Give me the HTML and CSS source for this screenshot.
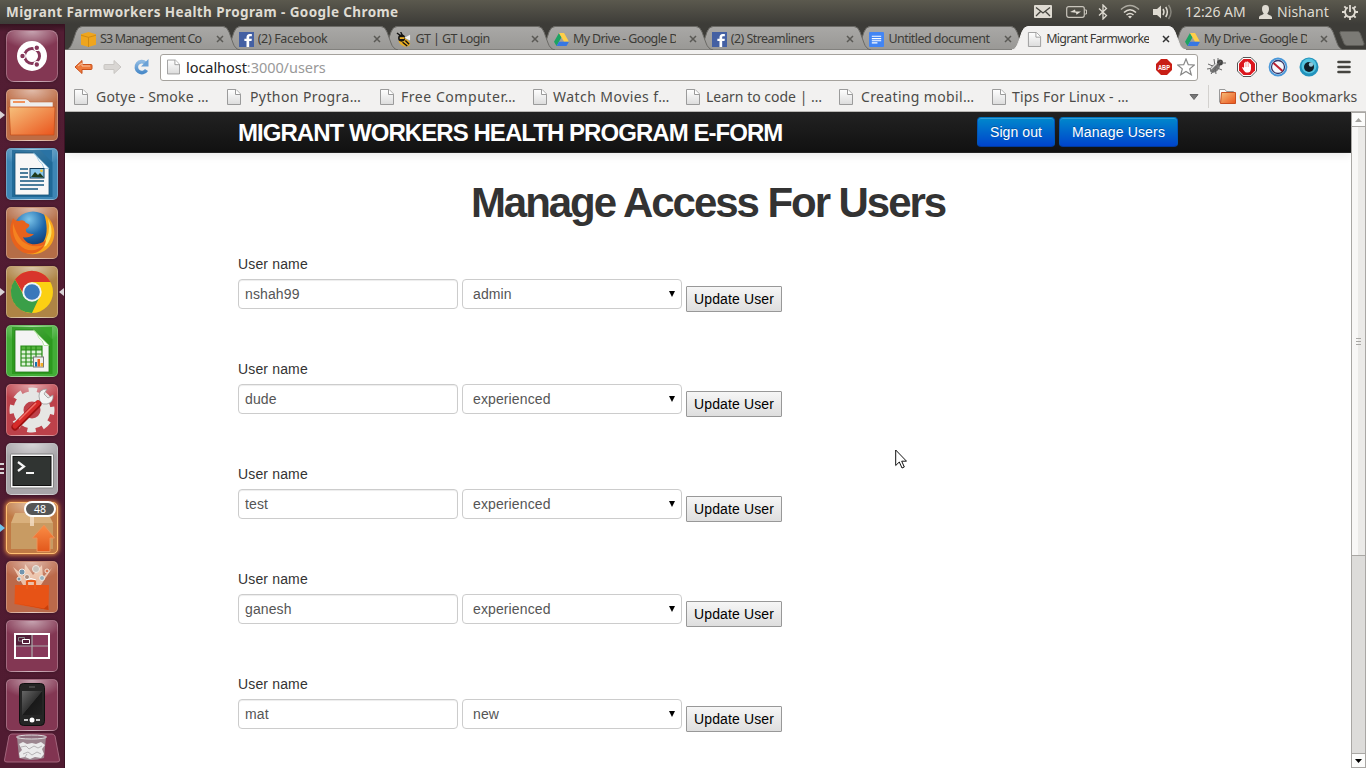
FILE: index.html
```html
<!DOCTYPE html>
<html lang="en">
<head>
<meta charset="utf-8">
<title>Migrant Farmworkers Health Program</title>
<link rel="stylesheet" href="styles.css">
</head>
<body>
<svg class="defs" width="0" height="0">
  <defs>
    <linearGradient id="tabFill" x1="0" y1="0" x2="0" y2="1"><stop offset="0" stop-color="#a9a8a6"/><stop offset="1" stop-color="#999895"/></linearGradient>
    <linearGradient id="paper" x1="0" y1="0" x2="0" y2="1"><stop offset="0" stop-color="#fff"/><stop offset="1" stop-color="#dcdcdc"/></linearGradient>
    <linearGradient id="orange" x1="0" y1="0" x2="1" y2="1"><stop offset="0" stop-color="#f6c07c"/><stop offset="1" stop-color="#ea541c"/></linearGradient>
    <linearGradient id="arrowUp" x1="0" y1="0" x2="0" y2="1"><stop offset="0" stop-color="#fb8d45"/><stop offset="1" stop-color="#e2581c"/></linearGradient>
    <linearGradient id="screen" x1="0" y1="0" x2="1" y2="1"><stop offset="0" stop-color="#666"/><stop offset=".5" stop-color="#333"/><stop offset=".52" stop-color="#191919"/><stop offset="1" stop-color="#222"/></linearGradient>
    <linearGradient id="bluearc" x1="0" y1="0" x2="0" y2="1"><stop offset="0" stop-color="#8db9e2"/><stop offset="1" stop-color="#4b8bc9"/></linearGradient>
    <radialGradient id="globe" cx=".4" cy=".2" r=".8"><stop offset="0" stop-color="#7cc5ea"/><stop offset=".5" stop-color="#1c66aa"/><stop offset="1" stop-color="#0b2a5c"/></radialGradient>
    <symbol id="tabShape" viewBox="0 0 174 24"><path d="M0 24C4 23 5 20 7 15L10 6Q12 .5 16 .5H157Q161 .5 163 6L167 17Q169 23 174 24Z"/></symbol>
    <symbol id="page" viewBox="0 0 14 16"><path d="M.5.5H9L13.500 5V15.500H.5Z" fill="url(#paper)" stroke="#9b9b9b"/><path d="M8.500 .5V5.500H13.500" fill="#fff" stroke="#9b9b9b"/></symbol>
    <symbol id="cross" viewBox="0 0 8 8"><path d="M1 1 7 7M7 1 1 7" fill="none" stroke="currentColor" stroke-width="1.500"/></symbol>
    <symbol id="fb" viewBox="0 0 14 14"><path fill="#4460a3" d="M0 0h14v14H0z"/><path fill="#fff" d="M7 14V8.500H5V6.300H7V5C7 3 8 1.800 10 1.800H12V4H10.700C9.800 4 9.500 4.300 9.500 5V6.300H12L11.700 8.500H9.500V14Z"/></symbol>
    <symbol id="drive" viewBox="0 0 16 14"><path fill="#1da362" d="M5.300 0 0 9.300 2.700 14 8 4.700Z"/><path fill="#ffcf48" d="M5.300 0H10.700L16 9.300H10.700Z"/><path fill="#3777e3" d="M5.300 9.300H16L13.300 14H2.700Z"/></symbol>
    <symbol id="docs" viewBox="0 0 16 16"><rect width="16" height="16" rx="1" fill="#4285f4"/><path stroke="#fff" stroke-width="1.200" d="M3 4.500H13M3 7H13M3 9.300H13M3 11.600H9"/></symbol>
  </defs>
</svg>

<header class="panel">
  <span class="panel-title">Migrant Farmworkers Health Program - Google Chrome</span>
  <div class="indicators">
    <svg class="i-mail" width="18" height="13" viewBox="0 0 18 13"><rect width="18" height="13" rx="1" fill="#dfdbd2"/><path d="M2 2.500 9 8 16 2.500M2 11 6.500 6.500M16 11 11.500 6.500" fill="none" stroke="#45443e" stroke-width="1.300"/></svg>
    <svg class="i-bat" width="21" height="12" viewBox="0 0 21 12"><rect x=".7" y=".7" width="17.600" height="10.600" rx="2" fill="none" stroke="#c9c5bc" stroke-width="1.200"/><path d="M19 4h1.500v4H19" fill="none" stroke="#c9c5bc"/><path d="M4 6 9 3.500 9.500 5.500 15 5.500 10.500 8.700 10 6.800Z" fill="#dfdbd2"/></svg>
    <svg class="i-bt" width="10" height="16" viewBox="0 0 10 16"><path d="M1 4.500 8.500 11.500 5 15V1L8.500 4.500 1 11.500" fill="none" stroke="#dfdbd2" stroke-width="1.300"/></svg>
    <svg class="i-wifi" width="20" height="15" viewBox="0 0 20 15"><g fill="none" stroke="#dfdbd2" stroke-width="1.600"><path d="M1 5.500Q10-2.500 19 5.500" opacity=".65"/><path d="M4 8.500Q10 3 16 8.500"/><path d="M6.500 11Q10 8 13.500 11"/></g><path d="M8 12.500Q10 11.200 12 12.500L10 14.500Z" fill="#dfdbd2"/></svg>
    <svg class="i-vol" width="20" height="16" viewBox="0 0 20 16"><path d="M0 5H4L8 1.500V14.500L4 11H0Z" fill="#dfdbd2"/><g fill="none" stroke="#dfdbd2" stroke-width="1.500"><path d="M10 5Q12 8 10 11"/><path d="M12.700 3Q16 8 12.700 13"/><path d="M15.500 1Q20.500 8 15.500 15" opacity=".4"/></g></svg>
    <span class="clock">12:26 AM</span>
    <svg class="i-user" width="13" height="14" viewBox="0 0 13 14"><path d="M6.500 0C9 0 10 1.500 10 4S9 7.500 8.300 8.500C8.500 10 13 10 13 12.500V14H0V12.500C0 10 4.500 10 4.700 8.500 4 7.500 3 6.500 3 4S4 0 6.500 0Z" fill="#dfdbd2"/></svg>
    <span class="user">Nishant</span>
    <svg class="i-gear" width="16" height="16" viewBox="0 0 16 16"><g fill="none" stroke="#dfdbd2"><path d="M5.800 3.500A5 5 0 1 0 10.200 3.500" stroke-width="1.900"/><path d="M8 1V8M8 13V16M0 8H3M13 8H16M2.300 2.300 4.500 4.500M13.700 2.300 11.500 4.500M2.300 13.700 4.500 11.500M13.700 13.700 11.500 11.500" stroke-width="1.800"/></g></svg>
  </div>
</header>

<div class="desktop">
  <nav class="launcher">
    <div class="app dash"><svg viewBox="0 0 52 52"><circle cx="26" cy="26" r="15" fill="#fff"/><circle cx="26" cy="26" r="7.500" fill="none" stroke="#85375a" stroke-width="3"/><g stroke="#fff" stroke-width="1.200" fill="#85375a"><circle cx="16.500" cy="26" r="2.800"/><circle cx="30.800" cy="17.700" r="2.800"/><circle cx="30.800" cy="34.500" r="2.800"/></g><circle cx="26" cy="26" r="5.500" fill="#fff"/></svg></div>
    <div class="app files"><i class="pip"></i><svg viewBox="0 0 52 52"><path d="M4 11Q4 10 5 10H20Q22 10 24 13H47V30H4Z" fill="#eee" stroke="#c56b3c" stroke-width=".6"/><path d="M7 12H19V14H7Z" fill="#f0925c"/><path d="M3 18H49L48 46H4.500Z" fill="url(#orange)" stroke="#c6501c" stroke-width=".8"/></svg></div>
    <div class="app writer"><svg viewBox="0 0 52 52"><path d="M6 2H36L46.500 14V49H6Z" fill="#17608f" opacity=".75"/><path d="M34 2H46V14Z" fill="#2a73a4"/><path d="M9 5H28L43 20V47H9Z" fill="#f7f7f7" stroke="#144f75" stroke-width=".8"/><path d="M27.500 5 43 20.500H38Q37 15 33 13 31 7 27.500 5Z" fill="#fff" stroke="#8ec4e2" stroke-width=".8"/><g stroke="#14577f" stroke-width="1.700"><path d="M14 21H22M14 25H22M14 29H22M14 33H38M14 37H38M14 41H32"/></g><rect x="24" y="20.500" width="14" height="9.500" fill="#8cc7e9" stroke="#0f3d5e"/><path d="M25 29 29 24 32 27 34 25 38 29.500Z" fill="#203b1b"/><circle cx="35.500" cy="22.800" r="1.400" fill="#f4c534"/></svg></div>
    <div class="app firefox"><svg viewBox="0 0 52 52"><circle cx="27" cy="24.500" r="20" fill="url(#globe)"/><path d="M38 7C50 15 52 32 42 41 37 46 28 49 20 46 38 43 45 28 38 7Z" fill="#f9a71c"/><path d="M42 12Q50 26 40 39L36 40Q46 26 42 12Z" fill="#ffe261"/><path d="M7 11C8 13 10 14 13 14Q18 12 20 16C24 17 25 19 20 22 19 26 23 27 28 27 24 31 19 31 17 30 20 38 31 40 40 33 39 43 29 49 19 46 7 42 2 28 5 17Z" fill="#e8621c"/><path d="M7 16Q5 34 19 42 29 46 38 38 26 42 16 34 10 27 7 16Z" fill="#f58220"/></svg></div>
    <div class="app chrome"><i class="pip"></i><i class="pip-right"></i><svg viewBox="0 0 52 52"><circle cx="26" cy="26" r="21" fill="#fbd013"/><path d="M9 13.500 18 30 26 35 33 32 26 47A21 21 0 0 1 9 13.500Z" fill="#3a9f48"/><path d="M9 13.500 17.500 28Q17 17 26 16H44.500A21 21 0 0 0 9 13.500Z" fill="#d8352c"/><circle cx="26" cy="26" r="9.700" fill="#f3f5f6"/><circle cx="26" cy="26" r="7.800" fill="#3a78bb"/></svg></div>
    <div class="app calc"><svg viewBox="0 0 52 52"><path d="M6 2H36L46.500 14V49H6Z" fill="#259318" opacity=".75"/><path d="M34 2H46V14Z" fill="#3aa52c"/><path d="M9 5H28L43 20V47H9Z" fill="#f4f4f4" stroke="#1e7a14" stroke-width=".8"/><path d="M27.500 5 43 20.500H38Q37 15 33 13 31 7 27.500 5Z" fill="#fff" stroke="#a4e28e" stroke-width=".8"/><path d="M15 21H36V41H15Z" fill="#dff2da"/><path d="M15 21H36V25H15Z" fill="#55b33e"/><path d="M15 21H36V41H15ZM15 25H36M15 29H36M15 33H36M15 37H36M20 21V41M25 21V41M30 21V41" stroke="#268b16" fill="none" stroke-width="1.200"/><rect x="27.500" y="32" width="10" height="10" fill="#eee" stroke="#777"/><path d="M29 37H31V41.500H29Z" fill="#1473b0"/><path d="M31.500 34H34V41.500H31.500Z" fill="#e5611d"/><path d="M34.500 38H37V41.500H34.500Z" fill="#f0ac25"/></svg></div>
    <div class="app settings"><svg viewBox="0 0 52 52"><circle cx="26" cy="26" r="13.500" fill="none" stroke="#e6e6e4" stroke-width="10"/><circle cx="26" cy="26" r="20" fill="none" stroke="#e6e6e4" stroke-width="5" stroke-dasharray="8.500 7.208" stroke-dashoffset="4"/><path d="M35 19 42 12" stroke="#e4e4e4" stroke-width="7"/><path d="M33 12Q33 5 41 5L38 10 42 14 47 11Q48 18 41 20 37 21 34 18Z" fill="#f2f2f2" stroke="#999" stroke-width=".8"/><path d="M9 43 32 20" stroke="#9e1111" stroke-width="7" stroke-linecap="round"/><path d="M9 42 32 19" stroke="#d62b29" stroke-width="5" stroke-linecap="round"/><path d="M13 36 30 19" stroke="#f0746d" stroke-width="1.500"/></svg></div>
    <div class="app terminal"><i class="bars"></i><svg viewBox="0 0 52 52"><rect x="4.500" y="11" width="43" height="34" rx="1" fill="#f7f7f7" stroke="#858585"/><rect x="7" y="13.500" width="38" height="29" fill="#303432" stroke="#111"/><path d="M12 19 18 23.500 12 28" fill="none" stroke="#f6f6f6" stroke-width="2.200"/><path d="M20 30H28" stroke="#f6f6f6" stroke-width="2"/></svg></div>
    <div class="app updates"><i class="pip blue"></i><svg viewBox="0 0 52 52"><path d="M9 11H42L47 21H5Z" fill="#d9b07c"/><path d="M5 21H47V47H5Z" fill="#c89b63"/><path d="M24 11H28V24H24Z" fill="#f4dfc5" opacity=".8"/><path d="M38 23 48.500 36H44V49.500H31V36H26.500Z" fill="url(#arrowUp)" stroke="#e9935a"/></svg><span class="badge">48</span></div>
    <div class="app store"><svg viewBox="0 0 52 52"><path d="M7 6 17 24H35L46 7 37 16 36 4 27 14 19 3 18 15Z" fill="#ffe7d2" opacity=".7"/><g stroke="#efe8e1" stroke-width="1"><circle cx="16" cy="11" r="3" fill="#7194ae"/><circle cx="30" cy="8" r="3.500" fill="#c9c3bc"/><circle cx="41" cy="10" r="2" fill="#d8744f"/><circle cx="21" cy="16" r="2.500" fill="#ac8e7e"/><circle cx="36" cy="17" r="2.500" fill="#9bb3bd"/><circle cx="13" cy="18" r="2" fill="#7a97a6"/></g><path d="M9 24 43 24 42.500 49 8.500 43Z" fill="#e75316"/><path d="M8.500 42 38 47.500 42 44 42.500 49Z" fill="#c63f0b"/><path d="M21 28V20H29V28" fill="none" stroke="#eb5a17" stroke-width="2.200"/><path d="M20 19Q25 16 30 19" fill="none" stroke="#fff" stroke-width="1"/></svg></div>
    <div class="app workspaces"><svg viewBox="0 0 52 52"><rect x="9" y="14" width="34" height="24" fill="#87385a" stroke="#fff" stroke-width="2"/><path d="M10 15H26V26H10Z" fill="#54203a"/><path d="M26 15V37M10 26H42" stroke="#aaa" stroke-width="1.200"/><path d="M12.500 17.500H18.500V21H12.500Z" fill="none" stroke="#888"/><path d="M16.500 19.500H23.500V23.500H16.500Z" fill="#54203a" stroke="#fff"/></svg></div>
    <div class="app phone"><svg viewBox="0 0 52 52"><rect x="13.500" y="4.500" width="25" height="42" rx="4" fill="#252525" stroke="#101010"/><rect x="16" y="12" width="20" height="24" fill="url(#screen)"/><path d="M23 8H29" stroke="#666"/><circle cx="26" cy="41" r="2.500" fill="#fff"/><path d="M18 41H22M30 41H34" stroke="#fff" stroke-width="1.500"/></svg></div>
    <div class="trash"><svg viewBox="0 0 56 30"><path d="M8 1H48Q50 1 51 3L55.500 27Q56 29 53 29H3Q0 29 .5 27L5 3Q6 1 8 1Z" fill="#813451" stroke="#a2657c"/><path d="M13 4H42L40 25Q27 29 15 25Z" fill="#a6a1a4" opacity=".75"/><ellipse cx="27.500" cy="4" rx="15" ry="2" fill="#8e6d7c" stroke="#ddd"/><path d="M15 11 19 9 23 11 28 10 32 11 37 9 41 12 38 16 40 21 37 25 31 24 26 26 21 24 16 25 15 20 18 17Z" fill="#ebebeb"/><path d="M17 14 22 13 25 16 30 13 34 15 38 13M19 21 24 19 28 22 33 19 37 21M21 24 23 21" stroke="#b5b2b4" fill="none"/></svg></div>
  </nav>

  <div class="browser">
    <div class="tabs">
      <div class="tab t1"><svg class="shape"><use href="#tabShape"/></svg><svg class="fav" viewBox="0 0 14 14"><path fill="#efa51d" d="M0 2 7 0 14 2V12L7 14 0 12Z"/><path d="M0 3 7 5 14 3M7 5V14" stroke="#c98512" fill="none" stroke-width=".8"/></svg><span class="label">S3 Management Co</span><svg class="x"><use href="#cross"/></svg></div>
      <div class="tab t2"><svg class="shape"><use href="#tabShape"/></svg><svg class="fav"><use href="#fb"/></svg><span class="label">(2) Facebook</span><svg class="x"><use href="#cross"/></svg></div>
      <div class="tab t3"><svg class="shape"><use href="#tabShape"/></svg><svg class="fav" viewBox="0 0 16 16"><ellipse cx="9" cy="11" rx="6.500" ry="4" fill="#e9ad22" transform="rotate(25 9 11)"/><circle cx="6" cy="6.500" r="3.800" fill="#151515"/><path d="M7 11 12 15M10 9 14 13M1 1 5 4M5 0 7 4" stroke="#111" stroke-width="1.500"/><path d="M9 6 15 3V9Z" fill="#f4f4f4"/><path d="M4 6.500H9" stroke="#e9ad22" stroke-width="2"/></svg><span class="label">GT | GT Login</span><svg class="x"><use href="#cross"/></svg></div>
      <div class="tab t4"><svg class="shape"><use href="#tabShape"/></svg><svg class="fav"><use href="#drive"/></svg><span class="label">My Drive - Google D</span><svg class="x"><use href="#cross"/></svg></div>
      <div class="tab t5"><svg class="shape"><use href="#tabShape"/></svg><svg class="fav"><use href="#fb"/></svg><span class="label">(2) Streamliners</span><svg class="x"><use href="#cross"/></svg></div>
      <div class="tab t6"><svg class="shape"><use href="#tabShape"/></svg><svg class="fav"><use href="#docs"/></svg><span class="label">Untitled document</span><svg class="x"><use href="#cross"/></svg></div>
      <div class="tab t7 active"><svg class="shape"><use href="#tabShape"/></svg><svg class="fav"><use href="#page"/></svg><span class="label">Migrant Farmworke</span><svg class="x"><use href="#cross"/></svg></div>
      <div class="tab t8"><svg class="shape"><use href="#tabShape"/></svg><svg class="fav"><use href="#drive"/></svg><span class="label">My Drive - Google D</span><svg class="x"><use href="#cross"/></svg></div>
      <svg class="newtab" width="26" height="15" viewBox="0 0 26 15"><path d="M2 .5H19Q20.500 .5 21.300 2.500L25 12.500Q25.300 14.500 23.500 14.500H8Q6 14.500 5 12.500L1 2.500Q.3 .5 2 .5Z" fill="#7b7a75" stroke="#5f5e59"/></svg>
    </div>

    <div class="toolbar">
      <svg class="back" width="19" height="16" viewBox="0 0 19 16"><path d="M1 8 8 1.500V5.500H17Q18 5.500 18 6.500V9.500Q18 10.500 17 10.500H8V14.500Z" fill="#ee7a3c" stroke="#c84f1a"/><path d="M4 7 8 4V7H16" fill="none" stroke="#f9c09c"/></svg>
      <svg class="fwd" width="19" height="16" viewBox="0 0 19 16"><path d="M18 8 11 1.500V5.500H2Q1 5.500 1 6.500V9.500Q1 10.500 2 10.500H11V14.500Z" fill="#d9d6d3" stroke="#c9c6c3"/></svg>
      <svg class="reload" width="16" height="18" viewBox="0 0 16 18"><path d="M12.500 5A5.500 5.500 0 1 0 13.500 12" fill="none" stroke="url(#bluearc)" stroke-width="3.600"/><path d="M15.500 1V8.500H8Z" fill="#6aa1d6"/></svg>
      <div class="omnibox">
        <svg class="o-page"><use href="#page"/></svg>
        <span class="url">localhost<span>:3000/users</span></span>
        <svg class="abp" width="16" height="16" viewBox="0 0 16 16"><path d="M5 0H11L16 5V11L11 16H5L0 11V5Z" fill="#c81e15"/><text x="8" y="10.600" text-anchor="middle" textLength="12" lengthAdjust="spacingAndGlyphs">ABP</text></svg>
        <svg width="18" height="18" viewBox="0 0 18 18"><path d="M9 1 11.300 6.700 17.300 7 12.700 10.900 14.300 16.800 9 13.500 3.700 16.800 5.300 10.900 .7 7 6.700 6.700Z" fill="#fff" stroke="#888" stroke-width="1.200"/></svg>
      </div>
      <div class="ext">
        <svg width="20" height="20" viewBox="0 0 20 20"><ellipse cx="9" cy="11" rx="6" ry="3.600" transform="rotate(-42 9 11)" fill="#777"/><ellipse cx="14" cy="5.500" rx="3" ry="3" fill="#444"/><path d="M2 7 16 13M8 2 10 17M5 17 15 4M1 12 8 11M12 4 12 1M16 6H20" stroke="#666" stroke-width="1"/><path d="M5 12 11 6" stroke="#ddd" stroke-width="1.500"/></svg>
        <svg width="20" height="20" viewBox="0 0 20 20"><path d="M6 .5H14L19.500 6V14L14 19.500H6L.5 14V6Z" fill="#fff" stroke="#555"/><path d="M6.500 2H13.500L18 6.500V13.500L13.500 18H6.500L2 13.500V6.500Z" fill="#dc161d"/><path d="M5 10.500 6 10 7 11V6Q7.600 5 8.200 6V5Q9 4 9.700 5L10.300 4.500Q11.300 4.300 11.400 5.500 12.500 5 12.800 6.500L14 7.500V12Q13.500 15.500 11 15.500H9Q7.500 15 5 10.500Z" fill="#fff"/><path d="M8.300 6V10M9.900 5V10M11.500 6V10" stroke="#e77" stroke-width=".5"/></svg>
        <svg width="20" height="20" viewBox="0 0 20 20"><circle cx="10" cy="10" r="8.500" fill="#fff" stroke="#4a98d9" stroke-width="1.800"/><circle cx="10" cy="10" r="6.500" fill="#f6f7fb" stroke="#33366b" stroke-width="1.300"/><path d="M5.500 6 14.500 14" stroke="#bd2030" stroke-width="2"/></svg>
        <svg width="20" height="20" viewBox="0 0 20 20"><circle cx="10" cy="10" r="9.500" fill="#2292bc"/><circle cx="10" cy="9" r="7.500" fill="#54c3df"/><circle cx="10" cy="10" r="5" fill="#101d27"/><circle cx="12" cy="7.500" r="2.200" fill="#8fc8d9"/></svg>
        <svg class="menu" width="14" height="14" viewBox="0 0 14 14"><path d="M1.500 2H12.500M1.500 7H12.500M1.500 12H12.500" stroke="#45443f" stroke-width="2.600" stroke-linecap="round"/></svg>
      </div>
    </div>

    <div class="bookmarks">
      <div class="bm b1"><svg><use href="#page"/></svg><span>Gotye - Smoke …</span></div>
      <div class="bm b2"><svg><use href="#page"/></svg><span>Python Progra…</span></div>
      <div class="bm b3"><svg><use href="#page"/></svg><span>Free Computer…</span></div>
      <div class="bm b4"><svg><use href="#page"/></svg><span>Watch Movies f…</span></div>
      <div class="bm b5"><svg><use href="#page"/></svg><span>Learn to code | …</span></div>
      <div class="bm b6"><svg><use href="#page"/></svg><span>Creating mobil…</span></div>
      <div class="bm b7"><svg><use href="#page"/></svg><span>Tips For Linux - …</span></div>
      <svg class="more" width="10" height="6" viewBox="0 0 10 6"><path d="M1 .5H9L5 5.500Z" fill="#777" stroke="#666"/></svg>
      <div class="other"><svg width="17" height="15" viewBox="0 0 17 15"><path d="M.5 13.500V.5H6L7.500 2.500H14.500V5" fill="#fafafa" stroke="#999"/><path d="M2.500 3.500H16.500V14.500H1.500Z" fill="url(#orange)" stroke="#c94f20"/></svg><span>Other Bookmarks</span></div>
    </div>

    <div class="view">
      <main class="doc">
        <div class="navbar">
          <div class="container nav-in">
            <span class="brand">MIGRANT WORKERS HEALTH PROGRAM E-FORM</span>
            <a class="btn signout">Sign out</a>
            <a class="btn manage">Manage Users</a>
          </div>
        </div>
        <div class="container">
          <h1>Manage Access For Users</h1>
          <form class="entry"><label>User name</label><div class="fields"><input type="text" value="nshah99"><div class="select"><select><option>admin</option></select></div><button type="button">Update User</button></div></form>
          <form class="entry"><label>User name</label><div class="fields"><input type="text" value="dude"><div class="select"><select><option>experienced</option></select></div><button type="button">Update User</button></div></form>
          <form class="entry"><label>User name</label><div class="fields"><input type="text" value="test"><div class="select"><select><option>experienced</option></select></div><button type="button">Update User</button></div></form>
          <form class="entry"><label>User name</label><div class="fields"><input type="text" value="ganesh"><div class="select"><select><option>experienced</option></select></div><button type="button">Update User</button></div></form>
          <form class="entry"><label>User name</label><div class="fields"><input type="text" value="mat"><div class="select"><select><option>new</option></select></div><button type="button">Update User</button></div></form>
        </div>
      </main>
      <div class="scrollbar">
        <div class="sb-btn up"><svg width="7" height="4" viewBox="0 0 7 4"><path d="M0 4 3.500 0 7 4Z" fill="#a5a39f"/></svg></div>
        <div class="thumb"><i></i></div>
        <div class="track"></div>
        <div class="sb-btn down"><svg width="7" height="4" viewBox="0 0 7 4"><path d="M0 0 3.500 4 7 0Z" fill="#000"/></svg></div>
      </div>
    </div>
  </div>
</div>
<svg class="cursor" width="12" height="20" viewBox="0 0 12 20"><path d="M.7 1V16.500L4.300 13 7 19 9.300 18 6.700 12.200H11.500Z" fill="#fff" stroke="#111"/></svg>
</body>
</html>
```
FILE: styles.css
```css
* { box-sizing: border-box; }
body { margin: 0; width: 1366px; height: 768px; overflow: hidden; display: flex; flex-direction: column; font-family: "Noto Sans", "Open Sans", sans-serif; background: #fff; }
svg { display: block; flex: none; }
.defs { position: absolute; }

/* Top panel */
.panel { height: 24px; flex: none; display: flex; align-items: center; justify-content: space-between; padding: 0 8px 0 6px; background: linear-gradient(#5b594e, #3d3c38); color: #dfdbd2; }
.panel-title { font-size: 13.5px; font-weight: 700; letter-spacing: .4px; white-space: nowrap; }
.indicators { display: flex; align-items: center; font-size: 14px; line-height: 22px; padding-bottom: 1px; white-space: nowrap; }
.i-bat { margin-left: 14px; }
.i-bt { margin-left: 11px; }
.i-wifi { margin-left: 12px; }
.i-vol { margin-left: 13px; }
.clock { margin-left: 12px; width: 61px; letter-spacing: -.05px; }
.i-user { margin-left: 13px; }
.user { margin-left: 5px; width: 52px; letter-spacing: .1px; }
.i-gear { margin-left: 13px; }

.desktop { flex: 1; display: flex; min-height: 0; }

/* Launcher */
.launcher { width: 65px; flex: none; padding: 6px 0 0 6px; display: flex; flex-direction: column; gap: 7px; background: linear-gradient(#35121f, #521d33 8px, #501b31); border-right: 1px solid #3b1224; }
.app { position: relative; width: 52px; height: 52px; flex: none; border-radius: 5px; border: 1px solid rgba(255,255,255,.25); background-color: #833753; background-image: radial-gradient(ellipse 32px 18px at 50% 0, rgba(255,255,255,.55), transparent); box-shadow: 0 0 3px rgba(0,0,0,.35); }
.app > svg { width: 52px; height: 52px; margin: -1px; }
.dash { border-radius: 8px; }
.files { background-color: #bd6c45; }
.writer { background-color: #3d86b5; }
.firefox { background-color: #b56d47; }
.chrome { background-color: #ae8445; }
.calc { background-color: #43ad37; }
.settings { background-color: #bd414a; }
.terminal { background-color: #a7a4a8; }
.updates { background-color: #c07a45; border-color: #ffc074; box-shadow: 0 0 4px 1px #e1873f; }
.store { background-color: #bb694a; }
.pip { position: absolute; left: -7px; top: 21px; border: 4px solid transparent; border-left: 5px solid #d9d2d5; border-right: 0; }
.pip.blue { border-left-color: #70c4ec; }
.pip-right { position: absolute; right: -7px; top: 21px; border: 4px solid transparent; border-right: 5px solid #d9d2d5; border-left: 0; }
.bars { position: absolute; left: -7px; top: 19px; width: 4px; height: 11px; background: repeating-linear-gradient(#d9d2d5 0 2px, transparent 2px 4.5px); }
.badge { position: absolute; left: 17px; top: -2px; width: 32px; height: 16px; border: 2px solid #fff; border-radius: 8px; background: #555; color: #fff; font-size: 10.5px; line-height: 12px; text-align: center; }
.trash { width: 56px; height: 30px; margin: -5px 0 0 -2px; }
.trash svg { width: 56px; height: 30px; }

/* Browser */
.browser { flex: 1; min-width: 0; display: flex; flex-direction: column; }
.tabs { height: 26px; flex: none; display: flex; padding: 2px 0 0 1px; background: #3d3c38; box-shadow: inset 0 -1px #696863; }
.tab { position: relative; width: 157.7px; height: 24px; flex: none; display: flex; align-items: center; padding: 2px 0 0 15px; color: #3c3b37; font-size: 12.5px; }
.t1 { z-index: 8; } .t2 { z-index: 7; } .t3 { z-index: 6; } .t4 { z-index: 5; } .t5 { z-index: 4; } .t6 { z-index: 3; } .t7 { z-index: 9; } .t8 { z-index: 1; }
.shape { position: absolute; left: 0; top: 0; width: 174px; height: 24px; fill: url(#tabFill); stroke: #6b6a66; stroke-width: 1; }
.active .shape { fill: #f2f1f0; stroke: #f2f1f0; }
.fav { position: relative; width: 15px; height: 15px; }
.label { position: relative; width: 105px; margin-left: 4px; overflow: hidden; white-space: nowrap; letter-spacing: -.55px; line-height: 20px; }
.t1 .label { letter-spacing: -.85px; }
.t2 .label { letter-spacing: -.35px; }
.t4 .label, .t8 .label { letter-spacing: -.65px; }
.t7 .label { letter-spacing: -.75px; }
.x { position: relative; width: 8px; height: 8px; margin-left: 13px; color: #5a5955; }
.active .x { color: #333; }
.newtab { margin: 5px 0 0 11px; }
.toolbar { height: 35px; flex: none; display: flex; align-items: center; padding: 0 15px 1px 9px; background: #f2f1f0; }
.fwd { margin-left: 10px; }
.reload { margin-left: 11px; }
.omnibox { position: relative; margin-left: 11px; width: 1038px; height: 27px; display: flex; align-items: center; padding: 0 2px 0 6px; border: 1px solid #a5a29d; border-radius: 3px; background: #fff; }
.o-page { width: 13px; height: 16px; }
.url { flex: 1; margin-left: 6px; font-size: 14.5px; line-height: 22px; padding-bottom: 1px; letter-spacing: -.05px; color: #222; }
.url span { color: #999; }
.abp { margin-right: 5px; }
.abp text { font: 700 7px "Liberation Sans", sans-serif; fill: #fff; }
.ext { display: flex; align-items: center; gap: 11px; margin-left: 8px; }
.menu { margin-left: 7px; }
.bookmarks { height: 27px; flex: none; display: flex; align-items: center; padding: 0 0 3px 9px; background: #f2f1f0; border-bottom: 1px solid #b9b7b4; font-size: 14px; line-height: 20px; color: #4c4b48; white-space: nowrap; }
.bm { width: 153px; flex: none; display: flex; align-items: center; }
.bm svg { width: 14px; height: 16px; }
.bm span { margin-left: 8px; letter-spacing: .2px; }
.b2 span { margin-left: 9px; letter-spacing: .4px; }
.b3 span { margin-left: 7px; letter-spacing: .55px; }
.b4 span { margin-left: 6px; letter-spacing: .45px; }
.b5 span { margin-left: 6px; letter-spacing: 0; }
.b6 span { letter-spacing: .35px; }
.b7 span { margin-left: 6px; letter-spacing: .15px; }
.more { margin-left: 44px; }
.other { display: flex; align-items: center; margin-left: 9px; height: 23px; padding-left: 10px; border-left: 1px solid #d3d1ce; }
.other span { margin-left: 3px; letter-spacing: .13px; }

/* Page */
.view { flex: 1; display: flex; min-height: 0; }
.doc { flex: 1; overflow: hidden; background: #fff; font: 14px/20px "Liberation Sans", Arial, sans-serif; letter-spacing: .08px; color: #333; }
.navbar { height: 41px; background: linear-gradient(#222, #111); border-bottom: 1px solid #252525; box-shadow: 0 1px 10px rgba(0,0,0,.1); }
.container { width: 940px; margin: 0 auto; }
.nav-in { display: flex; align-items: center; height: 40px; gap: 4px; }
.brand { flex: 1; padding-top: 1px; font-size: 24px; font-weight: 700; letter-spacing: -.95px; color: #fff; white-space: nowrap; }
.btn { height: 30px; padding: 4px 12px; border: 1px solid #04c; border-color: #0074bd #0055b8 #003a9e; border-radius: 4px; background: linear-gradient(#08c, #04c); box-shadow: inset 0 1px rgba(255,255,255,.2); color: #fff; text-shadow: 0 -1px rgba(0,0,0,.25); white-space: nowrap; }
.signout { width: 78px; }
.manage { width: 119px; letter-spacing: .17px; }
h1 { margin: 30px 0 31px; font-size: 42px; line-height: 40px; letter-spacing: -2.05px; text-align: center; }
.entry { height: 105px; margin: 0; }
.entry label { display: block; height: 25px; letter-spacing: .15px; }
.fields { display: flex; gap: 4px; }
input, select { display: block; width: 220px; height: 30px; margin: 0; padding: 4px 6px; border: 1px solid #ccc; border-radius: 4px; background: #fff; color: #555; font: inherit; line-height: 20px; letter-spacing: .12px; }
input { box-shadow: inset 0 1px 1px rgba(0,0,0,.075); }
select { appearance: none; padding-left: 10px; }
.select { position: relative; }
.select::after { content: ""; position: absolute; right: 7px; top: 12px; border: 3.5px solid transparent; border-top: 6px solid #000; border-bottom: 0; }
.fields button { width: 96px; height: 26px; margin: 7px 0 0; padding: 0; border: 1px solid #989898; border-radius: 1px; background: linear-gradient(#f6f6f6, #dedede); color: #000; font: inherit; letter-spacing: .13px; }

.scrollbar { width: 15px; flex: none; display: flex; flex-direction: column; border: solid #a9a7a4; border-width: 0 1px; background: #dddcda; }
.sb-btn { height: 15px; flex: none; display: flex; align-items: center; justify-content: center; background: #fcfcfb; border: 1px solid #a9a7a4; border-width: 1px 0; }
.thumb { height: 429px; flex: none; display: flex; align-items: center; justify-content: center; background: linear-gradient(90deg, #f8f7f6 50%, #ebeae8 50%); border-bottom: 1px solid #a9a7a4; }
.thumb i { width: 5px; height: 7px; background: repeating-linear-gradient(#a9a7a4 0 1px, transparent 1px 3px); }
.track { flex: 1; }
.cursor { position: absolute; left: 895px; top: 449px; }
```
